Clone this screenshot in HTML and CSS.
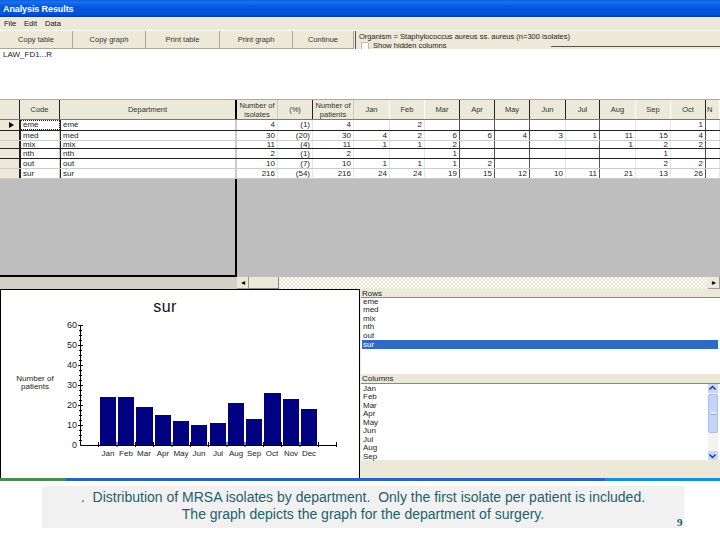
FILE: index.html
```html
<!DOCTYPE html>
<html lang="en">
<head>
<meta charset="utf-8">
<title>Analysis Results</title>
<link rel="stylesheet" href="styles.css">
</head>
<body>
<div class="slide">
  <div class="window">
    <div class="titlebar">Analysis Results</div>
    <div class="menubar"><span>File</span><span>Edit</span><span>Data</span></div>
    <div class="toolbar">
      <div class="btn">Copy table</div>
      <div class="btn">Copy graph</div>
      <div class="btn">Print table</div>
      <div class="btn">Print graph</div>
      <div class="btn btn-last">Continue</div>
      <div class="orgpanel">
        <div class="orgtext">Organism = Staphylococcus aureus ss. aureus (n=300 isolates)</div>
        <div class="hidden-row"><span class="check"></span><span class="hidden-label">Show hidden columns</span><span class="orgline"></span></div>
      </div>
    </div>
    <div class="memo">LAW_FD1...R</div>
    <div class="grid">
      <div class="row head">
        <span class="dk"></span><span class="dk ctr">Code</span><span class="thick ctr">Department</span><span class="ctr two">Number of isolates</span><span class="dk ctr">(%)</span><span class="ctr two">Number of patients</span><span class="ctr">Jan</span><span class="ctr">Feb</span><span class="dk ctr">Mar</span><span class="dk ctr">Apr</span><span class="dk ctr">May</span><span class="dk ctr">Jun</span><span class="dk ctr">Jul</span><span class="ctr">Aug</span><span class="ctr">Sep</span><span class="dk ctr">Oct</span><span>N</span>
      </div>
      <div class="row data r1 line">
        <span class="rh"><i class="arrow"></i></span><span class="txt focus">eme</span><span class="txt thick">eme</span><span>4</span><span>(1)</span><span>4</span><span></span><span>2</span><span class="v"></span><span class="v"></span><span class="v"></span><span></span><span class="v"></span><span></span><span></span><span class="v">1</span><span></span>
      </div>
      <div class="row data">
        <span class="rh"></span><span class="txt">med</span><span class="txt thick">med</span><span>30</span><span>(20)</span><span>30</span><span>4</span><span>2</span><span class="v">6</span><span class="v">6</span><span class="v">4</span><span>3</span><span class="v">1</span><span>11</span><span>15</span><span class="v">4</span><span></span>
      </div>
      <div class="row data r3 line">
        <span class="rh"></span><span class="txt">mix</span><span class="txt thick">mix</span><span>11</span><span>(4)</span><span>11</span><span>1</span><span>1</span><span class="v">2</span><span class="v"></span><span class="v"></span><span></span><span class="v"></span><span>1</span><span>2</span><span class="v">2</span><span></span>
      </div>
      <div class="row data line">
        <span class="rh"></span><span class="txt">nth</span><span class="txt thick">nth</span><span>2</span><span>(1)</span><span>2</span><span></span><span></span><span class="v">1</span><span class="v"></span><span class="v"></span><span></span><span class="v"></span><span></span><span>1</span><span class="v"></span><span></span>
      </div>
      <div class="row data">
        <span class="rh"></span><span class="txt">out</span><span class="txt thick">out</span><span>10</span><span>(7)</span><span>10</span><span>1</span><span>1</span><span class="v">1</span><span class="v">2</span><span class="v"></span><span></span><span class="v"></span><span></span><span>2</span><span class="v">2</span><span></span>
      </div>
      <div class="row data">
        <span class="rh"></span><span class="txt">sur</span><span class="txt thick">sur</span><span>216</span><span>(54)</span><span>216</span><span>24</span><span>24</span><span class="v">19</span><span class="v">15</span><span class="v">12</span><span>10</span><span class="v">11</span><span>21</span><span>13</span><span class="v">26</span><span></span>
      </div>
      <div class="grid-empty"><div class="empty-left"></div></div>
    </div>
    <div class="hscroll">
      <div class="hs-left"></div>
      <div class="hs-btn">&#9666;</div>
      <div class="hs-thumb"></div>
      <div class="hs-track"></div>
      <div class="hs-btn">&#9656;</div>
    </div>
    <div class="bottom">
      <div class="chart">
        <svg class="chart-svg" viewBox="1 290 358 187" width="358" height="187" aria-label="Bar chart of number of patients per month">
          <text class="c-title" x="165" y="312" text-anchor="middle">sur</text>
          <g class="c-label" text-anchor="middle">
            <text x="35" y="381">Number of</text>
            <text x="35" y="389">patients</text>
          </g>
          <g class="c-label c-num" text-anchor="end">
            <text x="77" y="328">60</text>
            <text x="77" y="348">50</text>
            <text x="77" y="368">40</text>
            <text x="77" y="388">30</text>
            <text x="77" y="408">20</text>
            <text x="77" y="428">10</text>
            <text x="77" y="448">0</text>
          </g>
          <g class="c-bar">
            <rect x="100" y="397" width="16" height="48"/>
            <rect x="118" y="397" width="16" height="48"/>
            <rect x="136" y="407" width="17" height="38"/>
            <rect x="155" y="415" width="16" height="30"/>
            <rect x="173" y="421" width="16" height="24"/>
            <rect x="191" y="425" width="16" height="20"/>
            <rect x="210" y="423" width="16" height="22"/>
            <rect x="228" y="403" width="16" height="42"/>
            <rect x="246" y="419" width="16" height="26"/>
            <rect x="264" y="393" width="17" height="52"/>
            <rect x="283" y="399" width="16" height="46"/>
            <rect x="301" y="409" width="16" height="36"/>
          </g>
          <path class="c-axis" d="M80.5 326V445.5H337"/>
          <path class="c-tick" d="M78 325.500h5M79 330.500h3M79 335.500h3M79 340.500h3M78 345.500h5M79 350.500h3M79 355.500h3M79 360.500h3M78 365.500h5M79 370.500h3M79 375.500h3M79 380.500h3M78 385.500h5M79 390.500h3M79 395.500h3M79 400.500h3M78 405.500h5M79 410.500h3M79 415.500h3M79 420.500h3M78 425.500h5M79 430.500h3M79 435.500h3M79 440.500h3"/>
          <path class="c-tick" d="M98.500 442v5M117 442v5M135.500 442v5M153.500 442v5M172 442v5M190.500 442v5M208.500 442v5M227 442v5M245 442v5M263.500 442v5M281.500 442v5M300 442v5M318.500 442v5M336.500 442v5"/>
          <g class="c-label" text-anchor="middle">
            <text x="108" y="456">Jan</text>
            <text x="126" y="456">Feb</text>
            <text x="144" y="456">Mar</text>
            <text x="163" y="456">Apr</text>
            <text x="181" y="456">May</text>
            <text x="199" y="456">Jun</text>
            <text x="218" y="456">Jul</text>
            <text x="236" y="456">Aug</text>
            <text x="254" y="456">Sep</text>
            <text x="272" y="456">Oct</text>
            <text x="291" y="456">Nov</text>
            <text x="309" y="456">Dec</text>
          </g>
        </svg>
      </div>
      <div class="side">
        <div class="side-head">Rows</div>
        <div class="list list-rows">
          <div>eme</div><div>med</div><div>mix</div><div>nth</div><div>out</div><div class="sel">sur</div>
        </div>
        <div class="side-head side-head2">Columns</div>
        <div class="list list-cols">
          <div class="cols-items">
            <div>Jan</div><div>Feb</div><div>Mar</div><div>Apr</div><div>May</div><div>Jun</div><div>Jul</div><div>Aug</div><div>Sep</div>
          </div>
          <div class="vscroll">
            <div class="vs-btn"><svg viewBox="0 0 9 9" width="9" height="9"><path d="M1.500 5.500L4.500 2.500L7.500 5.500" class="vs-chev"/></svg></div>
            <div class="vs-thumb"><b></b></div>
            <div class="vs-track"></div>
            <div class="vs-btn"><svg viewBox="0 0 9 9" width="9" height="9"><path d="M1.500 3.500L4.500 6.500L7.500 3.500" class="vs-chev"/></svg></div>
          </div>
        </div>
        <div class="side-foot"></div>
      </div>
    </div>
    <div class="taskbar"><div class="tb-start"></div><div class="tb-mid"></div><div class="tb-tray"></div></div>
  </div>
  <div class="caption-row">
    <div class="caption">
      <p>.  Distribution of MRSA isolates by department.  Only the first isolate per patient is included.</p>
      <p>The graph depicts the graph for the department of surgery.</p>
    </div>
    <div class="pageno">9</div>
  </div>
</div>
</body>
</html>
```
FILE: styles.css
```css
* { box-sizing: border-box; }
html, body { margin: 0; padding: 0; background: #fff; }
body { font-family: "Liberation Sans", Arial, sans-serif; }
.slide { width: 720px; height: 540px; overflow: hidden; position: relative; }
.window { width: 720px; height: 481px; display: flex; flex-direction: column; background: #ece9d8; }

.titlebar { height: 17px; flex: none; color: #fff; font-size: 9px; letter-spacing: -0.100px; font-weight: bold; line-height: 18px; padding-left: 3px;
  background: linear-gradient(180deg, #0a5fe6 0, #1a70f0 12%, #0457dd 40%, #0250d8 85%, #013a9c 100%); }
.menubar { height: 13px; flex: none; display: flex; gap: 8px; padding-left: 4px; font-size: 7.500px; line-height: 13px; color: #111; background: #ece9d8; }
.toolbar { height: 19px; flex: none; display: flex; background: #ece9d8; border-top: 1px solid #fff; }
.btn { height: 18px; width: 73px; flex: none; font-size: 7.500px; line-height: 17px; text-align: center; color: #333; background: #ece9d8; border-right: 1px solid #aca899; border-bottom: 1px solid #aca899; }
.btn:nth-child(3) { width: 74px; }
.btn-last { width: 61px; }
.orgpanel { margin-left: 1px; flex: 1; height: 18px; overflow: hidden; font-size: 7.500px; color: #222; border-left: 1px solid #555; padding-left: 3px; }
.orgtext { line-height: 11px; white-space: nowrap; }
.hidden-row { display: flex; align-items: flex-start; height: 7px; gap: 4px; padding-left: 2px; position: relative; white-space: nowrap; }
.hidden-label { line-height: 8px; }
.check { width: 8px; height: 8px; background: #fff; border: 1px solid #bbb; flex: none; }
.orgline { position: absolute; left: 192px; right: 0; top: 4px; height: 1px; background: #555; }

.memo { height: 51px; flex: none; background: #fff; font-size: 8px; line-height: 10px; padding: 1px 0 0 3px; color: #222; border-bottom: 1px solid #aaa; }

.grid { flex: none; height: 177px; background: #c0c0c0; display: flex; flex-direction: column; }
.row { display: grid; grid-template-columns: 20px 40px 177px 41px 35px 41px 36px 35px 35px 35px 35px 36px 34px 36px 35px 35px 14px; flex: none; }
.row > span { display: block; overflow: hidden; white-space: nowrap; }
.head { height: 20px; background: #ece9d8; font-size: 7.500px; color: #333; border-bottom: 1px solid #777; }
.head > span { border-right: 1px solid #fff; padding: 0 1px; line-height: 19px; }
.head > .dk { border-right-color: #222; }
.head > .ctr { text-align: center; }
.head > .two { line-height: 9px; padding-top: 1px; border-right-color: #ccc; white-space: normal; }
.head > .thick, .data > .thick { border-right: 2px solid #000; }
.data { height: 10px; background: #fff; font-size: 8px; line-height: 10px; color: #222; text-align: right; border-bottom: 1px solid #ccc; }
.data.r1 { height: 11px; }
.data.r3 { height: 8px; line-height: 8px; }
.data.line { border-bottom-color: #222; }
.data > span { padding-right: 2px; border-right: 1px solid #e6e6e6; }
.data > .v { border-right-color: #555; }
.data > .txt { text-align: left; padding-left: 2px; border-left: 1px solid #222; border-right-color: #ccc; }
.data > .rh { background: #ece9d8; border-right: 1px solid #222; position: relative; }
.focus { outline: 1px dotted #222; outline-offset: -1px; }
.arrow { position: absolute; left: 9px; top: 2px; width: 0; height: 0; border-left: 5px solid #000; border-top: 3px solid transparent; border-bottom: 3px solid transparent; }
.grid-empty { flex: 1; background: #bebebe; }
.empty-left { width: 237px; height: 100%; border-right: 2px solid #000; border-bottom: 2px solid #000; }

.hscroll { height: 12px; flex: none; display: flex; background: #d4d0c8; }
.hs-left { width: 237px; flex: none; background: #d4d0c8; }
.hs-btn { width: 12px; flex: none; background: #ece9d8; font-size: 8px; line-height: 11px; text-align: center; color: #000; border-right: 1px solid #999; border-bottom: 1px solid #999; }
.hs-thumb { width: 30px; flex: none; background: #ece9d8; border-right: 1px solid #888; border-bottom: 1px solid #888; }
.hs-track { flex: 1; background-color: #fff; background-image: conic-gradient(#e4e1d2 25%, #fff 0 50%, #e4e1d2 0 75%, #fff 0); background-size: 4px 4px; }

.bottom { flex: 1; display: flex; min-height: 0; }
.chart { width: 360px; flex: none; background: #fff; border: 1px solid #000; border-width: 1px 1px 0 1px; }
.chart-svg { display: block; }
.c-title { font-family: "Liberation Sans", Arial, sans-serif; font-size: 16px; fill: #111; letter-spacing: 0.500px; }
.c-label { font-family: "Liberation Sans", Arial, sans-serif; font-size: 8px; fill: #222; }
.c-num { font-size: 9px; }
.c-bar { fill: #000080; }
.c-axis { fill: none; stroke: #000; stroke-width: 1; }
.c-tick { fill: none; stroke: #000; stroke-width: 1; }

.side { flex: 1; display: flex; flex-direction: column; background: #ece9d8; padding-left: 1px; min-width: 0; }
.side-head { height: 9px; flex: none; font-size: 8px; line-height: 9px; color: #222; padding-left: 1px; border-bottom: 1px solid #888; }
.side-head2 { height: 10px; line-height: 10px; }
.list { background: #fff; font-size: 8px; color: #222; }
.list-rows { height: 76px; padding: 0 2px 0 1px; flex: none; }
.list-rows > div { height: 8.400px; line-height: 8.400px; padding-left: 1px; }
.list-rows > .sel { background: #316ac5; color: #fff; height: 9px; line-height: 9px; }
.list-cols { height: 76px; flex: none; display: flex; }
.cols-items { flex: 1; padding: 1px 0 0 2px; }
.cols-items > div { height: 8.460px; line-height: 8.460px; }
.vscroll { width: 10px; margin-right: 2px; flex: none; display: flex; flex-direction: column; background: #f4f3ee; }
.vs-btn { height: 9px; flex: none; background: #c8d8f4; display: flex; }
.vs-chev { fill: none; stroke: #1c3c8c; stroke-width: 1.500; }
.vs-thumb { height: 39px; margin-top: 1px; flex: none; background: #c3d4f6; border: 1px solid #a8bfe8; border-radius: 2px; display: flex; align-items: center; justify-content: center; }
.vs-thumb b { display: block; width: 5px; height: 3px; background: #e8eefb; border-bottom: 1px solid #8fa8dc; }
.vs-track { flex: 1; }
.side-foot { flex: 1; }

.taskbar { height: 3px; flex: none; display: flex; }
.tb-start { width: 66px; background: #4e8a4e; }
.tb-mid { flex: 1; background: #2a62c0; }
.tb-tray { width: 115px; background: #1690d8; }

.caption-row { display: flex; height: 59px; padding: 5px 0 0 42px; align-items: flex-start; background: #fff; }
.caption { width: 642px; height: 42px; flex: none; background: #f1f1f1; color: #1f5f6b; font-size: 14px; line-height: 17px; text-align: center; padding: 3px 0 0; }
.caption p { margin: 0; white-space: pre-wrap; }
.pageno { margin: 30px 0 0 -7px; font-family: "Liberation Serif", serif; font-size: 11px; line-height: 12px; font-weight: bold; color: #1f5f6b; }
```
